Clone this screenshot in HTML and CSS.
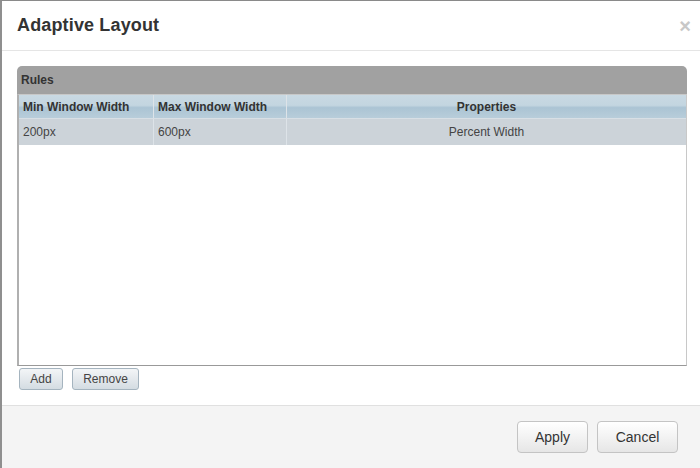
FILE: index.html
```html
<!DOCTYPE html>
<html>
<head>
<meta charset="utf-8">
<link rel="stylesheet" href="styles.css">
</head>
<body>
<div class="dialog">
  <div class="dlg-header">
    <h1 class="title">Adaptive Layout</h1>
    <span class="close">&#215;</span>
  </div>
  <div class="dlg-body">
    <div class="panel">
      <div class="panel-head">Rules</div>
      <div class="grid">
        <div class="row head-row">
          <div class="cell c1">Min Window Width</div>
          <div class="cell c2">Max Window Width</div>
          <div class="cell c3 center">Properties</div>
        </div>
        <div class="row data-row">
          <div class="cell c1">200px</div>
          <div class="cell c2">600px</div>
          <div class="cell c3 center">Percent Width</div>
        </div>
      </div>
    </div>
    <div class="tools">
      <button class="tbtn add">Add</button>
      <button class="tbtn remove">Remove</button>
    </div>
  </div>
  <div class="dlg-footer">
    <button class="btn apply">Apply</button>
    <button class="btn cancel">Cancel</button>
  </div>
</div>
</body>
</html>
```
FILE: styles.css
```css
html, body {
  margin: 0;
  padding: 0;
  background: #fff;
}
body {
  font-family: "Liberation Sans", Arial, sans-serif;
  color: #333;
}
.dialog {
  width: 700px;
  height: 468px;
  box-sizing: border-box;
  border-top: 1px solid #8a8a8a;
  border-left: 2px solid #8f8f8f;
  display: flex;
  flex-direction: column;
  background: #fff;
}
.dlg-header {
  height: 49px;
  flex: none;
  border-bottom: 1px solid #e5e5e5;
  display: flex;
  align-items: center;
  justify-content: space-between;
  padding: 0 9px 0 15px;
}
.title {
  margin: 0;
  font-size: 18px;
  font-weight: bold;
  color: #333;
  letter-spacing: 0.15px;
}
.close {
  font-size: 20px;
  font-weight: bold;
  color: #c8c8c8;
  line-height: 1;
}
.dlg-body {
  flex: 1;
  min-height: 0;
  padding: 15px 13px 15px 15px;
  display: flex;
  flex-direction: column;
}
.panel {
  flex: 1;
  display: flex;
  flex-direction: column;
}
.panel-head {
  height: 28px;
  background: #a1a1a1;
  border-radius: 5px 5px 0 0;
  font-size: 12px;
  font-weight: bold;
  color: #333;
  display: flex;
  align-items: center;
  padding-left: 4px;
}
.grid {
  flex: 1;
  border: 1px solid #999;
  border-top: 1px solid #c8c8c8;
  border-left: 2px solid #b0b0b0;
  border-right: 1px solid #c8c8c8;
  background: #fff;
}
.row {
  display: flex;
  font-size: 12px;
}
.head-row {
  height: 23px;
  background: linear-gradient(#c9d9e3 0%, #c3d5e0 45%, #abc4d4 55%, #b8cdda 100%);
  font-weight: bold;
  color: #333;
}
.data-row {
  height: 26px;
  background: #ccd3d9;
  color: #444;
  border-top: 1px solid #d8dfe5;
}
.cell {
  display: flex;
  align-items: center;
  padding-left: 4px;
  box-sizing: border-box;
  border-right: 1px solid #dde3e8;
}
.c1 { width: 135px; }
.c2 { width: 133px; }
.c3 { flex: 1; border-right: none; }
.center { justify-content: center; padding-left: 0; }
.tools {
  display: flex;
  gap: 9px;
  padding: 2px 0 0 2px;
}
.tbtn {
  height: 22px;
  font-family: "Liberation Sans", Arial, sans-serif;
  font-size: 12px;
  color: #444;
  background: linear-gradient(#f3f5f7, #d4dce2);
  border: 1px solid #a5b4bf;
  border-radius: 3px;
  padding: 0;
}
.add { width: 44px; }
.remove { width: 67px; }
.dlg-footer {
  flex: none;
  box-sizing: border-box;
  height: 63px;
  border-top: 1px solid #e0e0e0;
  background: #f4f4f4;
  display: flex;
  justify-content: flex-end;
  align-items: flex-start;
  gap: 9px;
  padding: 15px 22px 0 0;
}
.btn {
  height: 32px;
  font-family: "Liberation Sans", Arial, sans-serif;
  font-size: 14px;
  color: #333;
  background: linear-gradient(#ffffff, #e6e6e6);
  border: 1px solid #c4c4c4;
  border-radius: 4px;
  padding: 0;
}
.apply { width: 71px; }
.cancel { width: 81px; }
```
